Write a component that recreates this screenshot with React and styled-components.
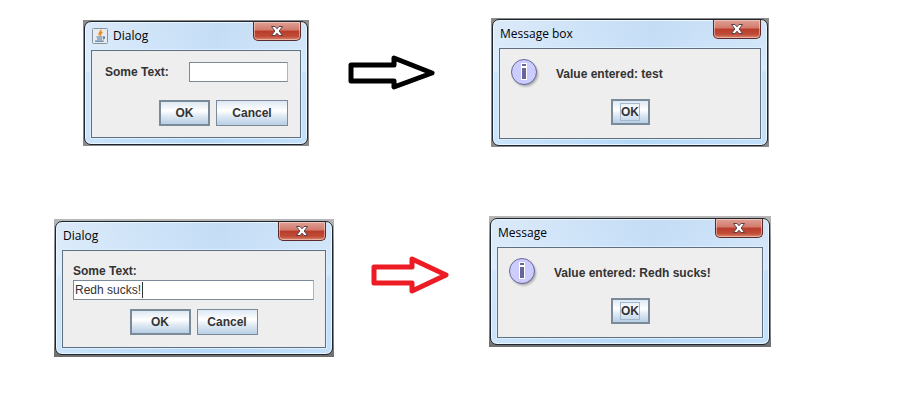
import styled, { createGlobalStyle, css } from "styled-components";

const GlobalStyle = createGlobalStyle`
  *, *::before, *::after {
    box-sizing: border-box;
  }
  body {
    margin: 0;
    background: #ffffff;
  }
`;

const Page = styled.main`
  display: grid;
  grid-template-columns: 280fr 155fr 282fr;
  justify-items: center;
  align-items: start;
  row-gap: 69px;
  padding: 18px 146px 60px 54px;
  font-family: "Liberation Sans", Arial, sans-serif;
`;

const Backdrop = styled.section`
  width: ${({ $width }) => $width}px;
  max-width: 100%;
  margin-top: ${({ $drop }) => $drop || 0}px;
  margin-left: ${({ $indent }) => $indent || 0}px;
  padding: ${({ $shadow }) => ($shadow ? "2px 1px" : "1px")};
  background: ${({ $shadow }) =>
    $shadow
      ? "linear-gradient(#b8b8b8, #8c8c8c 20%, #858585 85%, #6e6e6e)"
      : "#8a8a8a"};
`;

const Frame = styled.div`
  padding: 0 6px 6px;
  border: 1px solid #20262d;
  border-radius: 7px;
  box-shadow: inset 0 0 0 1px #e9f6ff;
  background:
    linear-gradient(100deg, rgba(255, 255, 255, 0.3), rgba(165, 205, 240, 0.2) 55%, rgba(255, 255, 255, 0.15)),
    linear-gradient(#cbe0f6 0, #d0e6fc 40%, #bcdcfb 42%, #b9dbfa 100%);
`;

const TitleBar = styled.header`
  display: flex;
  align-items: flex-start;
  height: 28px;
  padding-left: 1px;
`;

const Title = styled.h2`
  flex: 1;
  margin: 0;
  padding-left: ${({ $icon }) => ($icon ? 5 : 0)}px;
  font: 400 12px/28px "Open Sans", "Segoe UI", sans-serif;
  color: #000000;
`;

const CloseButton = styled.button`
  display: flex;
  align-items: center;
  justify-content: center;
  width: 48px;
  height: 19px;
  padding: 0;
  border: 1px solid #5b2a2b;
  border-top: 0;
  border-radius: 0 0 5px 5px;
  box-shadow: inset 0 0 0 1px rgba(255, 225, 215, 0.5);
  background: linear-gradient(#dfa195, #d27a6c 45%, #b83c2b 50%, #c04c38 80%, #d98a72);
`;

const Panel = styled.div`
  display: flex;
  flex-direction: column;
  border: 1px solid #5f6f80;
  box-shadow: 0 0 0 1px #dcefff;
  background: #eeeeee;
  padding: ${({ $pad }) => $pad};
`;

const Row = styled.div`
  display: flex;
  align-items: center;
  justify-content: ${({ $justify }) => $justify || "flex-start"};
  gap: ${({ $gap }) => $gap || 6}px;
  margin-top: ${({ $top }) => $top || 0}px;
`;

const labelText = css`
  font: 700 12px/18px "Liberation Sans", Arial, sans-serif;
  color: #333333;
`;

const Label = styled.label`
  ${labelText}
`;

const Message = styled.p`
  ${labelText}
  margin: 0;
`;

const Field = styled.div`
  position: relative;
  display: flex;
  width: ${({ $width }) => $width || "100%"};
`;

const TextField = styled.input`
  width: 100%;
  height: 20px;
  padding: 0 1px;
  border: 1px solid #7a8a99;
  border-right-color: #a3b8cc;
  outline: 0;
  background: #ffffff;
  font: 400 12px/18px "Liberation Sans", Arial, sans-serif;
  color: #333333;
  caret-color: transparent;
`;

const Caret = styled.span`
  position: absolute;
  top: 2px;
  left: 69px;
  width: 1px;
  height: 16px;
  background: #333333;
`;

const Button = styled.button`
  ${labelText}
  display: flex;
  align-items: center;
  justify-content: center;
  width: ${({ $width }) => $width}px;
  height: 26px;
  padding: 0;
  border: ${({ $primary }) => ($primary ? 2 : 1)}px solid #7a8a99;
  background: linear-gradient(#dde8f3, #ffffff 40%, #dde8f3 65%, #b8cfe5);
`;

const FocusRing = styled.span`
  border: 1px solid #a3b8cc;
  line-height: 16px;
`;

const Arrow = styled.svg`
  display: block;
  margin-top: ${({ $top }) => $top}px;
  margin-right: ${({ $shift }) => $shift || 0}px;
`;

function CloseIcon() {
  return (
    <svg width="14" height="12" viewBox="0 0 14 12" aria-hidden="true">
      <path
        d="M1.5 1.5H5L7 3.8 9 1.5H12.5L9.2 6 12.5 10.5H9L7 8.2 5 10.5H1.5L4.8 6Z"
        fill="#ffffff"
        stroke="#5a4048"
        strokeLinejoin="round"
      />
    </svg>
  );
}

function JavaIcon() {
  return (
    <svg width="16" height="16" viewBox="0 0 16 16" aria-hidden="true">
      <rect x=".5" y=".5" width="15" height="15" rx="1" fill="#e8ecf0" stroke="#8592a0" />
      <path d="M8.8 1.8C9.6 3.6 5.8 4.5 7.6 7.4M10.6 4C8.4 5 8.2 6 9 7.6" fill="none" stroke="#e8892a" strokeWidth="1.5" />
      <path d="M4.5 9H10.5M5 11H10M3.2 13.2H11.6M11 8.8C13.2 8.6 12.8 10.6 10.8 11" fill="none" stroke="#4f7299" strokeWidth="1.2" />
    </svg>
  );
}

function InfoIcon() {
  return (
    <svg width="32" height="32" viewBox="0 0 32 32" role="img" aria-label="Information">
      <defs>
        <filter id="info-shadow" x="-20%" y="-20%" width="150%" height="150%">
          <feGaussianBlur stdDeviation="1.2" />
        </filter>
      </defs>
      <circle cx="15.5" cy="16" r="12.5" fill="#a8a8a8" filter="url(#info-shadow)" />
      <circle cx="14" cy="14" r="12.5" fill="#ccccff" stroke="#666699" />
      <path d="M11 5H17V9H11ZM11 9H17V22H11Z" fill="#ffffff" />
      <path d="M12 6H16V8H12ZM12 10H16V21H12Z" fill="#666699" />
    </svg>
  );
}

function Window({ title, icon, children, pad, ...frame }) {
  return (
    <Backdrop aria-label={title} {...frame}>
      <Frame>
        <TitleBar>
          {icon && <Row $top={6}>{icon}</Row>}
          <Title $icon={!!icon}>{title}</Title>
          <CloseButton type="button" aria-label="Close">
            <CloseIcon />
          </CloseButton>
        </TitleBar>
        <Panel $pad={pad}>{children}</Panel>
      </Frame>
    </Backdrop>
  );
}

function MessageWindow({ title, message, ...frame }) {
  return (
    <Window title={title} pad="9px 10px 13px" {...frame}>
      <Row $gap={14}>
        <InfoIcon />
        <Message>{message}</Message>
      </Row>
      <Row $justify="center" $top={9}>
        <Button type="button" $width={39} $primary>
          <FocusRing>OK</FocusRing>
        </Button>
      </Row>
    </Window>
  );
}

export default function App() {
  return (
    <>
      <GlobalStyle />
      <Page>
        <Window
          title="Dialog"
          icon={<JavaIcon />}
          pad="11px 12px 11px 13px"
          $width={226}
          $drop={2}
          $indent={4}
        >
          <Row $justify="space-between">
            <Label htmlFor="short-text">Some Text:</Label>
            <Field $width="99px">
              <TextField id="short-text" type="text" />
            </Field>
          </Row>
          <Row $justify="flex-end" $top={18}>
            <Button type="button" $width={51} $primary>OK</Button>
            <Button type="button" $width={72}>Cancel</Button>
          </Row>
        </Window>
        <Arrow width="88" height="38" viewBox="0 0 88 38" $top={36} $shift={40} aria-hidden="true">
          <path d="M3 11H46V4L84 19 46 33V27H3Z" fill="#ffffff" stroke="#000000" strokeWidth="5" strokeLinejoin="round" />
        </Arrow>
        <MessageWindow title="Message box" message="Value entered: test" $width={278} />

        <Window title="Dialog" pad="11px 11px 12px 10px" $width={280} $drop={3} $shadow>
          <Label htmlFor="long-text">Some Text:</Label>
          <Field>
            <TextField id="long-text" type="text" defaultValue="Redh sucks!" />
            <Caret />
          </Field>
          <Row $justify="center" $top={9}>
            <Button type="button" $width={61} $primary>OK</Button>
            <Button type="button" $width={61}>Cancel</Button>
          </Row>
        </Window>
        <Arrow width="80" height="40" viewBox="0 0 80 40" $top={39} $shift={4} aria-hidden="true">
          <path d="M4 12H42V4L76 20 42 36V28H4Z" fill="#ffffff" stroke="#ed1c24" strokeWidth="5" strokeLinejoin="round" />
        </Arrow>
        <MessageWindow title="Message" message="Value entered: Redh sucks!" $width={282} $shadow />
      </Page>
    </>
  );
}
